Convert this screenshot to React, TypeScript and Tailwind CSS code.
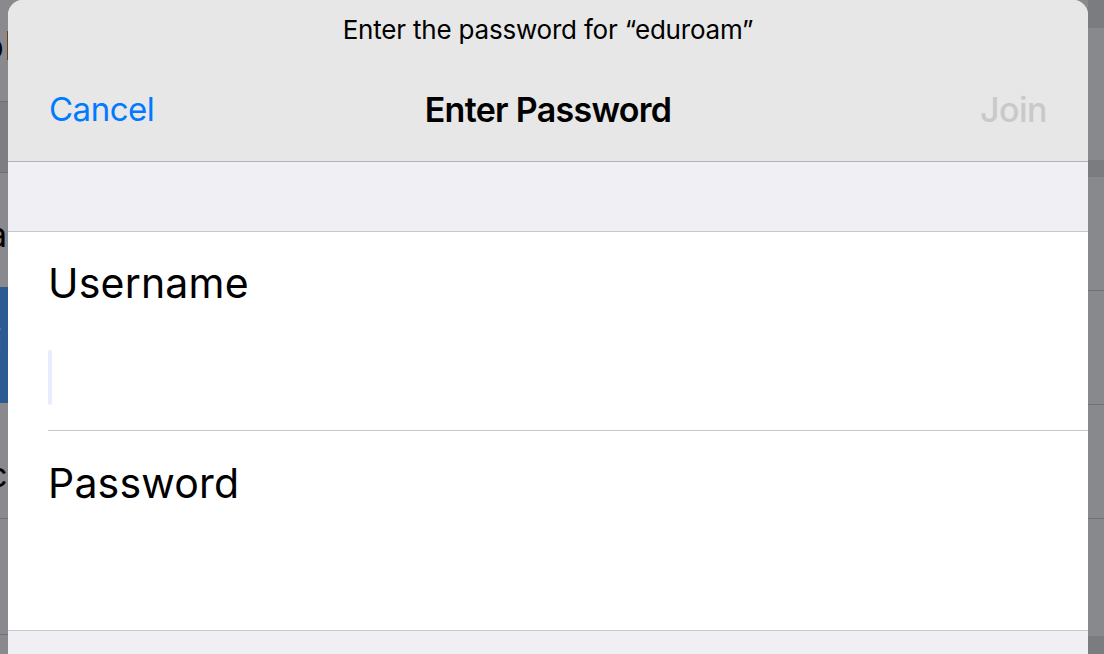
import React from "react"

const font = { fontFamily: "Inter, 'Noto Sans', sans-serif" }

const LeftStrip = () => (
  <div className="w-2 shrink-0 flex flex-col overflow-hidden bg-[#8a8a8e] text-black">
    <div className="h-[101px] shrink-0 relative">
      <span className="absolute left-[-20px] top-[20px] text-[40px] leading-[52px] whitespace-nowrap">oP</span>
    </div>
    <div className="h-[71px] shrink-0 border-t border-[#707074] bg-[#7e7e82]" />
    <div className="h-[115px] shrink-0 border-t border-[#707074] relative">
      <span className="absolute left-[-12px] top-[40px] text-[34px] leading-[44px]">a</span>
    </div>
    <div className="h-[116px] shrink-0 bg-[#2b5b92] relative">
      <span className="absolute left-[-6px] top-[34px] text-[34px] leading-[40px] text-[#9aa3ad]">i</span>
    </div>
    <div className="h-[116px] shrink-0 border-b border-[#707074] relative">
      <span className="absolute left-[-12px] top-[50px] text-[34px] leading-[44px]">c</span>
    </div>
    <div className="h-[116px] shrink-0 border-b border-[#707074]" />
    <div className="flex-1" />
  </div>
)

const RightStrip = () => (
  <div className="w-4 shrink-0 flex flex-col bg-[#88898d]">
    <div className="h-[28px] shrink-0 bg-[#7b7c80]" />
    <div className="h-[132px] shrink-0" />
    <div className="h-[17px] shrink-0 bg-[#7b7c80]" />
    <div className="h-[114px] shrink-0 border-b border-[#6f7074]" />
    <div className="h-[114px] shrink-0 border-b border-[#6f7074]" />
    <div className="h-[114px] shrink-0 border-b border-[#6f7074]" />
    <div className="h-[117px] shrink-0" />
    <div className="flex-1 bg-[#7b7c80]" />
  </div>
)

export default function App() {
  return (
    <div className="w-[1104px] h-[654px] flex overflow-hidden bg-[#8a8a8e]" style={font}>
      <LeftStrip />
      <div className="flex-1 flex flex-col rounded-t-[15px] overflow-hidden bg-[#efeff4]">
        <div className="h-[162px] shrink-0 flex flex-col bg-[#e7e7e7] border-b border-[#b2b2b2]">
          <div className="h-[58px] shrink-0 flex items-center justify-center text-[26px] text-black tracking-[-0.2px]">
            Enter the password for “eduroam”
          </div>
          <div className="flex-1 grid grid-cols-[1fr_auto_1fr] items-center px-[41px]">
            <span className="justify-self-start text-[33px] text-[#007aff] tracking-[-0.5px]">Cancel</span>
            <span className="text-[34px] font-semibold text-black tracking-[-0.7px]">Enter Password</span>
            <span className="justify-self-end text-[34px] font-medium text-[#c9c9c9] tracking-[-0.5px]">Join</span>
          </div>
        </div>
        <div className="h-[70px] shrink-0 border-b border-[#c8c7cc]" />
        <div className="h-[399px] shrink-0 flex flex-col bg-white border-b border-[#c8c7cc] pl-[40px]">
          <div className="h-[199px] shrink-0 flex flex-col border-b border-[#c8c7cc]">
            <div className="h-[104px] shrink-0 flex items-center text-[41px] text-black tracking-[0.2px]">Username</div>
            <div className="h-[14px] shrink-0" />
            <div className="w-[4px] h-[55px] rounded-full bg-[#e8ecfc]" />
          </div>
          <div className="h-[106px] shrink-0 flex items-center text-[41px] text-black tracking-[0.2px]">Password</div>
        </div>
        <div className="flex-1" />
      </div>
      <RightStrip />
    </div>
  )
}
